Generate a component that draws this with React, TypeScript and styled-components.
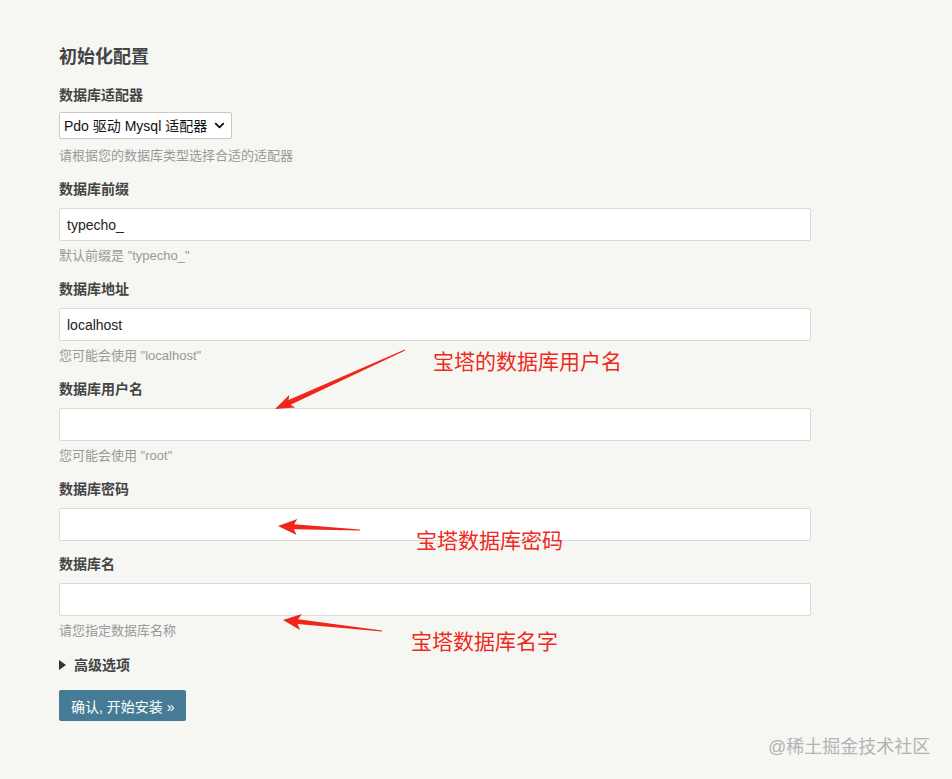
import React from "react";
import styled, { createGlobalStyle } from "styled-components";
import { ChevronDown } from "lucide-react";

const GlobalStyle = createGlobalStyle`
  html, body {
    margin: 0;
    padding: 0;
    background: #f6f6f3;
  }
  body {
    font-family: "Liberation Sans", "Noto Sans CJK SC", sans-serif;
    color: #444;
  }
`;

const Page = styled.div`
  position: relative;
  min-height: 779px;
  padding: 45px 0 0 59px;
  box-sizing: border-box;
`;

const Form = styled.div`
  width: 752px;
  display: flex;
  flex-direction: column;
`;

const Title = styled.h2`
  margin: 0 0 16px;
  font-size: 18px;
  line-height: 24px;
  font-weight: bold;
  color: #444;
`;

const Field = styled.div<{ $tight?: boolean }>`
  display: flex;
  flex-direction: column;
  gap: ${(p) => (p.$tight ? 7 : 0)}px;
  margin-bottom: 13px;
`;

const Label = styled.label<{ $tight?: boolean }>`
  font-size: 14px;
  line-height: 20px;
  font-weight: bold;
  color: #444;
  margin-bottom: ${(p) => (p.$tight ? 0 : 9)}px;
`;

const Input = styled.input`
  box-sizing: border-box;
  width: 100%;
  height: 33px;
  padding: 0 7px;
  border: 1px solid #d9d9d6;
  border-radius: 2px;
  background: #fff;
  font-family: inherit;
  font-size: 14px;
  color: #222;
  outline: none;
`;

const Desc = styled.p<{ $tight?: boolean }>`
  margin: ${(p) => (p.$tight ? 0 : 5)}px 0 0;
  font-size: 13px;
  line-height: 20px;
  color: #999;
`;

const SelectWrap = styled.div`
  position: relative;
  width: 173px;
  height: 27px;
`;

const Select = styled.select`
  appearance: none;
  box-sizing: border-box;
  width: 100%;
  height: 100%;
  padding: 0 20px 0 4px;
  border: 1px solid #c8c8c5;
  border-radius: 2px;
  background: #fff;
  font-family: inherit;
  font-size: 14px;
  color: #111;
  outline: none;
`;

const Chevron = styled(ChevronDown)`
  position: absolute;
  right: 5px;
  top: 6px;
  pointer-events: none;
  color: #111;
`;

const Advanced = styled.div`
  display: flex;
  align-items: center;
  gap: 8px;
  font-size: 14px;
  line-height: 20px;
  font-weight: bold;
  color: #444;
  margin: 1px 0 15px;
`;

const Triangle = styled.span`
  width: 0;
  height: 0;
  border-top: 5px solid transparent;
  border-bottom: 5px solid transparent;
  border-left: 7px solid #333;
`;

const Submit = styled.button`
  align-self: flex-start;
  height: 31px;
  padding: 0 12px;
  border: none;
  border-radius: 2px;
  background: #467b96;
  color: #fff;
  font-family: inherit;
  font-size: 14px;
  cursor: pointer;
`;

const Overlay = styled.svg`
  position: absolute;
  left: 0;
  top: 0;
  pointer-events: none;
`;

const Note = styled.span<{ $x: number; $y: number }>`
  position: absolute;
  left: ${(p) => p.$x}px;
  top: ${(p) => p.$y}px;
  font-size: 21px;
  line-height: 28px;
  color: #ee2a1e;
  white-space: nowrap;
`;

const Watermark = styled.span`
  position: absolute;
  left: 768px;
  top: 735px;
  font-size: 18px;
  line-height: 24px;
  color: #b3b3b3;
  white-space: nowrap;
`;

type Pt = [number, number];

// tapered arrow, thin at the tail, head at the tip
const arrowPoints = (tail: Pt, tip: Pt, headLen: number, headHalf: number, shaft: number) => {
  const dx = tip[0] - tail[0];
  const dy = tip[1] - tail[1];
  const len = Math.hypot(dx, dy);
  const ux = dx / len;
  const uy = dy / len;
  const nx = -uy;
  const ny = ux;
  const bx = tip[0] - ux * headLen;
  const by = tip[1] - uy * headLen;
  const back = 3;
  const pts: Pt[] = [
    [tail[0] + nx * 0.6, tail[1] + ny * 0.6],
    [bx + nx * shaft / 2, by + ny * shaft / 2],
    [bx - ux * back + nx * headHalf, by - uy * back + ny * headHalf],
    tip,
    [bx - ux * back - nx * headHalf, by - uy * back - ny * headHalf],
    [bx - nx * shaft / 2, by - ny * shaft / 2],
    [tail[0] - nx * 0.6, tail[1] - ny * 0.6],
  ];
  return pts.map((p) => `${p[0].toFixed(1)},${p[1].toFixed(1)}`).join(" ");
};

const arrows = [
  { tail: [405, 350] as Pt, tip: [275, 409] as Pt, head: 16, half: 7 },
  { tail: [360, 530] as Pt, tip: [278, 526] as Pt, head: 16, half: 8 },
  { tail: [382, 631] as Pt, tip: [283, 620] as Pt, head: 15, half: 8 },
];

interface TextFieldProps {
  label: string;
  value?: string;
  desc?: string;
}

const TextField: React.FC<TextFieldProps> = ({ label, value, desc }) => (
  <Field>
    <Label>{label}</Label>
    <Input type="text" defaultValue={value} />
    {desc && <Desc>{desc}</Desc>}
  </Field>
);

const App: React.FC = () => {
  return (
    <>
      <GlobalStyle />
      <Page>
        <Form>
          <Title>初始化配置</Title>

          <Field $tight>
            <Label $tight>数据库适配器</Label>
            <SelectWrap>
              <Select defaultValue="mysql">
                <option value="mysql">Pdo 驱动 Mysql 适配器</option>
              </Select>
              <Chevron size={15} strokeWidth={3} />
            </SelectWrap>
            <Desc $tight>请根据您的数据库类型选择合适的适配器</Desc>
          </Field>

          <TextField label="数据库前缀" value="typecho_" desc={'默认前缀是 "typecho_"'} />
          <TextField label="数据库地址" value="localhost" desc={'您可能会使用 "localhost"'} />
          <TextField label="数据库用户名" desc={'您可能会使用 "root"'} />
          <TextField label="数据库密码" />
          <TextField label="数据库名" desc="请您指定数据库名称" />

          <Advanced>
            <Triangle />
            高级选项
          </Advanced>

          <Submit type="button">确认, 开始安装 »</Submit>
        </Form>

        <Overlay width={952} height={779} viewBox="0 0 952 779">
          {arrows.map((a, i) => (
            <polygon key={i} points={arrowPoints(a.tail, a.tip, a.head, a.half, 5)} fill="#f0261b" />
          ))}
        </Overlay>

        <Note $x={433} $y={348}>宝塔的数据库用户名</Note>
        <Note $x={416} $y={527}>宝塔数据库密码</Note>
        <Note $x={411} $y={628}>宝塔数据库名字</Note>

        <Watermark>@稀土掘金技术社区</Watermark>
      </Page>
    </>
  );
};

export default App;
